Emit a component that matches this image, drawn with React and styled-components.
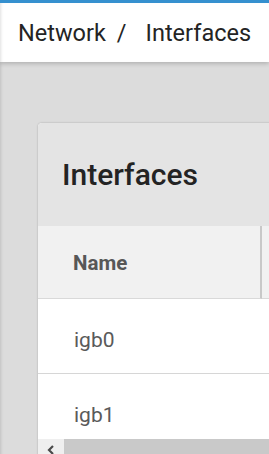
import styled, { createGlobalStyle } from "styled-components";

const GlobalStyle = createGlobalStyle`
  html, body {
    margin: 0;
    padding: 0;
    background: #dcdcdc;
    font-family: Roboto, "Liberation Sans", sans-serif;
    overflow: hidden;
  }
`;

const Page = styled.div`
  min-height: 100vh;
  overflow: hidden;
  box-shadow: inset 3px 0 3px -2px rgba(0, 0, 0, 0.12);
`;

const TopBar = styled.header`
  position: relative;
  z-index: 2;
  height: 59px;
  border-top: 3px solid #3590cf;
  background: #fff;
  box-shadow: 0 2px 4px rgba(0, 0, 0, 0.18), inset 3px 0 3px -2px rgba(0, 0, 0, 0.12);
  display: flex;
  align-items: center;
  padding-left: 18px;
  white-space: nowrap;
`;

const Crumb = styled.span`
  font-size: 23.5px;
  color: #242424;
`;

const Divider = styled.span`
  font-size: 23.5px;
  color: #242424;
  padding: 0 19px 0 11px;
`;

const Content = styled.main`
  padding: 61px 0 0 38px;
  overflow: hidden;
`;

const Card = styled.section`
  width: 640px;
  background: #fff;
  border-radius: 4px 4px 0 0;
  box-shadow: 0 0 2px rgba(0, 0, 0, 0.28);
  overflow: hidden;
`;

const CardHeader = styled.div`
  height: 103px;
  background: #e4e4e4;
  display: flex;
  align-items: center;
  padding-left: 24px;
`;

const Title = styled.h2`
  margin: 0;
  font-size: 30px;
  font-weight: 500;
  color: #232323;
`;

const Table = styled.div`
  display: grid;
  grid-template-columns: 224px 1fr;
`;

const HeadCell = styled.div`
  height: 73px;
  background: #f1f1f1;
  border-bottom: 1px solid #d9d9d9;
  border-right: ${(p) => (p.$sep ? "2px solid #c8c8c8" : "none")};
  display: flex;
  align-items: center;
  padding-left: 35px;
  padding-top: 2px;
  box-sizing: border-box;
  font-size: 20.5px;
  font-weight: 700;
  color: #575757;
`;

const Cell = styled.div`
  height: 75px;
  border-bottom: 1px solid #d6d6d6;
  padding: 29px 0 0 36px;
  box-sizing: border-box;
  font-size: 21px;
  color: #5a5a5a;
`;

const ScrollBar = styled.div`
  display: flex;
  height: 16px;
  margin-top: -10px;
  position: relative;
`;

const ScrollButton = styled.div`
  width: 26px;
  background: #efefef;
  display: flex;
  justify-content: center;
  padding-top: 6px;
  box-sizing: border-box;
`;

const Thumb = styled.div`
  flex: 1;
  background: #c9c9c9;
`;

const rows = ["igb0", "igb1"];

export default function App() {
  return (
    <Page>
      <GlobalStyle />
      <TopBar>
        <Crumb>Network</Crumb>
        <Divider>/</Divider>
        <Crumb>Interfaces</Crumb>
      </TopBar>
      <Content>
        <Card>
          <CardHeader>
            <Title>Interfaces</Title>
          </CardHeader>
          <Table>
            <HeadCell $sep>Name</HeadCell>
            <HeadCell />
            {rows.map((r) => [
              <Cell key={r}>{r}</Cell>,
              <Cell key={r + "-x"} />,
            ])}
          </Table>
          <ScrollBar>
            <ScrollButton>
              <svg width="10" height="10" viewBox="0 0 10 10">
                <path d="M7 1 L3 5 L7 9" fill="none" stroke="#4a4a4a" strokeWidth="2.2" />
              </svg>
            </ScrollButton>
            <Thumb />
          </ScrollBar>
        </Card>
      </Content>
    </Page>
  );
}
